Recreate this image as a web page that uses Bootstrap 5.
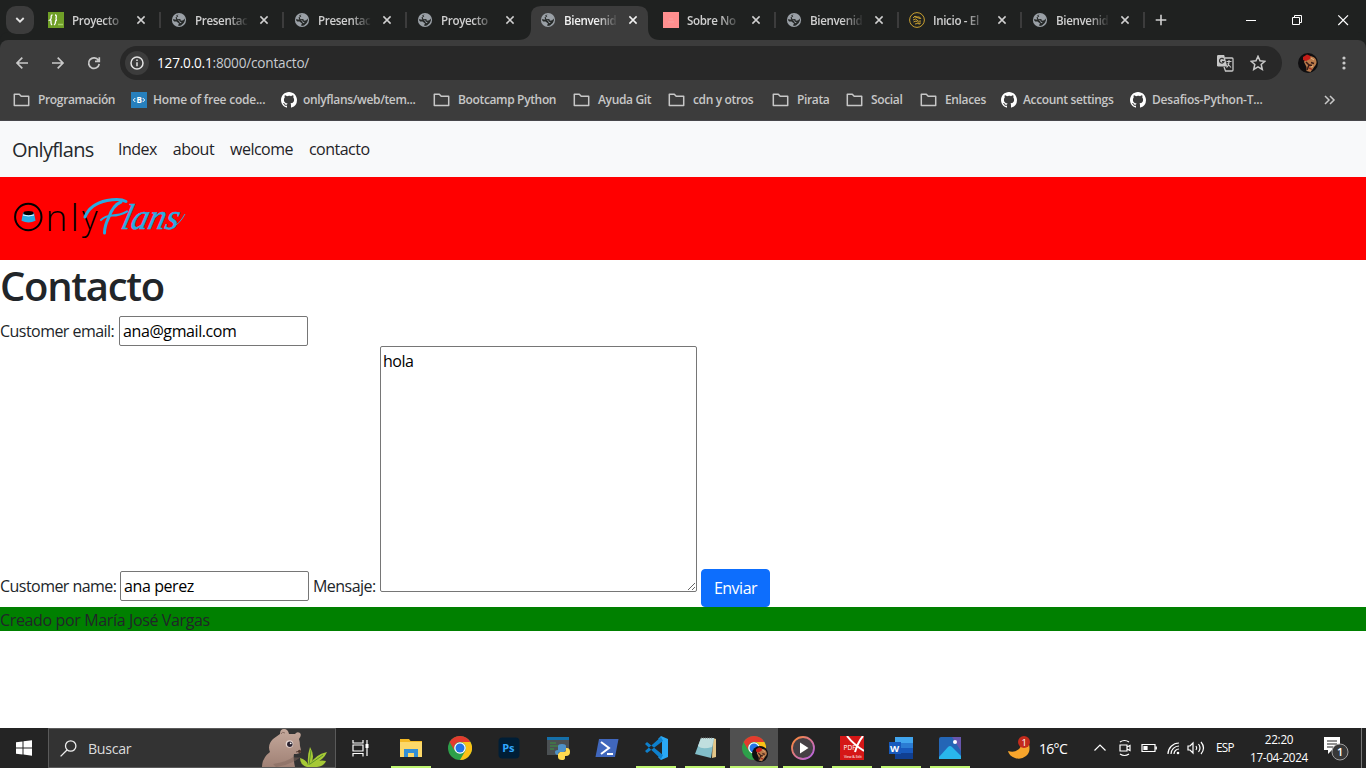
<!DOCTYPE html>
<html lang="es">
<head>
<meta charset="utf-8">
<meta name="viewport" content="width=device-width, initial-scale=1">
<title>Bienvenidos</title>
<link href="https://cdn.jsdelivr.net/npm/bootstrap@5.3.0/dist/css/bootstrap.min.css" rel="stylesheet">
<script src="https://cdn.jsdelivr.net/npm/bootstrap@5.3.0/dist/js/bootstrap.bundle.min.js"></script>
<style>
body{font-family:"Open Sans","Noto Sans",sans-serif;width:1366px;height:768px;overflow:hidden;letter-spacing:-.3px}
svg{display:block;flex:none}
.strip{height:40px;background:#1f2120;padding-left:6px}
.tabsearch{width:28px;height:28px;border-radius:10px;background:#3c3c3c;margin-right:2px;flex:none}
.tab{width:123px;height:40px;padding-left:12px;position:relative;flex:none;color:#d0d0d0}
.tab .ttl{width:54px;padding-top:1px;margin-left:8px;font-size:11.6px;font-weight:600;white-space:nowrap;-webkit-mask-image:linear-gradient(90deg,#000 60%,transparent 100%);letter-spacing:-.35px}
.tab .x{margin-left:10px}
.tab.sep::after{content:"";position:absolute;right:-2px;top:12px;width:2px;height:16px;background:#3c3c3c}
.tab.on{color:#f2f2f2}
.tab.on .shape{position:absolute;left:-10px;top:6px}
.tab.on>*:not(.shape){position:relative}
.tools{background:#3c3c3c;height:46px;box-shadow:0 -8px 0 #1f2120;border-radius:8px 8px 0 0;color:#c9c9c9;padding:0 14px}
.behind{background:#1f2120}
.omni{height:34px;width:1162px;border-radius:17px;background:#282828;padding-left:5px;font-size:13.6px;letter-spacing:-.2px;color:#c7cbd0}
.url{margin-left:8px;padding-top:1px}
.info-dot{width:24px;height:24px;border-radius:50%;background:#3c3c3c}
.marks{background:#3c3c3c;height:35px;border-bottom:1px solid #47464a;display:grid;grid-template-columns:118px 150px 152px 140px 95px 104px 74px 74px 81px 129px 194px 12px;padding:0 0 7px 13px;align-items:center;color:#c7c7c7;font-size:12px;font-weight:600;white-space:nowrap;letter-spacing:-.35px}
.marks>span{display:flex;align-items:center;gap:6px}
.marks>.fold{gap:7px}
.marks>.wide{letter-spacing:-.22px}
.page{height:607px;background:#fff}
.page .navbar{--bs-navbar-color:#1f2327;--bs-navbar-nav-link-padding-x:8px;height:56px;color:#1f2327}
.page .brandname{width:82px;letter-spacing:-.65px;padding-top:6px;padding-bottom:4px;color:#26292c}
.page .nav-link{white-space:nowrap;letter-spacing:-.52px}
.hero{height:83px;background:red;padding:17px 0 0 12px}
.logo{overflow:visible}
h1.head{font-size:40px;font-weight:600;line-height:48px;height:48px;padding-top:2px;letter-spacing:-1.3px}
.box{width:189px;height:30px;border:1px solid #767676;border-radius:2px;padding:1px 2px 1px 3px;color:#000;background:#fff;outline:0;letter-spacing:-.4px}
.lab{line-height:31px;height:30px;white-space:nowrap;letter-spacing:-.54px}
.area{width:317px;height:246px;border:1px solid #767676;border-radius:2px;padding:2px;color:#000;outline:0;display:block;overflow:auto;letter-spacing:-.5px}
.row-end{height:261px}
.send{width:69px;height:38px;border-radius:4px;padding:6px 0;letter-spacing:-.5px}
.foot{background:green;height:24px;line-height:26px;color:#212529;letter-spacing:-.36px}
.bar{height:40px;background:#242424;color:#fff}
.find{width:288px;height:40px;background:#333;border:1px solid #5a5a5a;color:#dcdcdc;font-size:14.2px;padding-left:11px}
.app{width:49px;height:40px;padding-right:2px;position:relative;display:flex;align-items:center;justify-content:center;flex:none}
.app.run::after{content:"";position:absolute;left:4px;width:40px;bottom:0;height:2px;background:#bff571}
.app.cur::before{content:"";position:absolute;left:0;width:48px;height:40px;background:#505050}
.app.cur::after{left:0;width:48px}
.app svg{position:relative}
.slot{display:flex;justify-content:center;flex:none}
.clock{width:76px;font-size:11.7px;line-height:18px;text-align:center}
</style>
</head>
<body>
<svg width="0" height="0" class="position-absolute">
<defs>
<symbol id="globe" viewBox="0 0 16 16"><circle cx="8" cy="8" r="7.100" fill="#9aa0a6"/><path d="M8.500 2.200 6.300 3.300 7.300 4.300 5.600 5.600 6.500 7.200 9.300 7 9.900 8.700 12.300 8.200 13.700 6.500 13.900 8.500 12.700 11 10 13.500 7.600 14.100 7.200 12.900 8 11.500 5.500 9.600 3.200 9.400 1.700 7.800 2.200 7.300 6 7.800 8.300 9.500 9 11.300 10.800 10.200 9 9.800 8.400 8.400 5.500 8 4.500 5.600 5.900 4.500 5.200 3.200z" fill="#252827"/></symbol>
<symbol id="x" viewBox="0 0 10 10"><path d="m1.4 1.4 7.2 7.2m0-7.2L1.4 8.6" stroke="currentColor" stroke-width="1.5"/></symbol>
<symbol id="fold" viewBox="0 0 18 16"><path d="M1.3 2.2h5l1.900 2h7.500v9.200H1.300z" fill="none" stroke="#c7c7c7" stroke-width="1.500" stroke-linejoin="round"/></symbol>
<symbol id="gh" viewBox="0 0 16 16"><path fill="#fff" d="M8 0C3.58 0 0 3.58 0 8c0 3.54 2.29 6.53 5.47 7.59.4.07.55-.17.55-.38 0-.19-.01-.82-.01-1.49-2.01.37-2.53-.49-2.69-.94-.09-.23-.48-.94-.82-1.13-.28-.15-.68-.52-.01-.53.63-.01 1.08.58 1.23.82.72 1.21 1.87.87 2.33.66.07-.52.28-.87.51-1.07-1.78-.2-3.64-.89-3.64-3.95 0-.87.31-1.59.82-2.15-.08-.2-.36-1.02.08-2.12 0 0 .67-.21 2.2.82A7.4 7.4 0 0 1 8 3.87c.68 0 1.36.09 2 .26 1.53-1.04 2.2-.82 2.2-.82.44 1.1.16 1.92.08 2.12.51.56.82 1.27.82 2.15 0 3.07-1.87 3.75-3.65 3.95.29.25.54.73.54 1.48 0 1.07-.01 1.93-.01 2.2 0 .21.15.46.55.38A8 8 0 0 0 16 8c0-4.42-3.58-8-8-8z"/></symbol>
<symbol id="chrome" viewBox="0 0 24 24"><circle cx="12" cy="12" r="12" fill="#2da04a"/><path d="M1.6 6A12 12 0 0 1 22.4 6H12a6 6 0 0 0-5.2 9z" fill="#e33b2e"/><path d="M22.4 6A12 12 0 0 1 12 24l5.2-9A6 6 0 0 0 12 6z" fill="#fbc116"/><circle cx="12" cy="12" r="5.8" fill="#fff"/><circle cx="12" cy="12" r="4.5" fill="#2374e8"/></symbol>
<symbol id="face" viewBox="0 0 20 20"><circle cx="10" cy="10" r="10" fill="#0f0e10"/><path d="M8 4c6-2 11 1 10.500 6-1 3-2 3-3 5l-3 4-4-1v-4L6 9z" fill="#b97a4a"/><path d="m5 4 4-2.500L12.500 3l-.5 3-4 2-3-1z" fill="#c51d18"/><path d="m8 9 3 3-2 5M13 9.500l3 1M11.500 12l2.500.5" stroke="#381b17" stroke-width="1.500" fill="none"/><path d="m11 15 3 1.500" stroke="#a0271b" stroke-width="1.300"/><path d="m13 5 3 2m-3 7 2-1" stroke="#e9b887"/></symbol>
</defs>
</svg>

<header class="behind">
<div class="strip d-flex align-items-center">
<div class="tabsearch d-flex align-items-center justify-content-center"><svg width="10" height="10" viewBox="0 0 10 10"><path d="m1.3 3 3.7 3.7L8.7 3" fill="none" stroke="#e3e3e3" stroke-width="1.8"/></svg></div>
<div class="tab sep d-flex align-items-center"><svg width="16" height="16"><path d="M0 0h16v16H0z" fill="#6f9f27"/><path d="M4.500 3Q3 3 3.200 5T2 8q1.200 0 1 2t1 3M7 3q1.700 0 1.200 2.500T9 8q-1.500 0-1.500 2T6 13" fill="none" stroke="#fff" stroke-width="1.300"/><path d="M10 12.500h5" stroke="#a6cf68" stroke-width="1.500"/></svg><span class="ttl">Proyecto</span><svg class="x" width="10" height="10"><use href="#x"/></svg></div>
<div class="tab sep d-flex align-items-center"><svg width="16" height="16"><use href="#globe"/></svg><span class="ttl">Presentac</span><svg class="x" width="10" height="10"><use href="#x"/></svg></div>
<div class="tab sep d-flex align-items-center"><svg width="16" height="16"><use href="#globe"/></svg><span class="ttl">Presentac</span><svg class="x" width="10" height="10"><use href="#x"/></svg></div>
<div class="tab d-flex align-items-center"><svg width="16" height="16"><use href="#globe"/></svg><span class="ttl">Proyecto</span><svg class="x" width="10" height="10"><use href="#x"/></svg></div>
<div class="tab on d-flex align-items-center"><svg class="shape" width="145" height="34"><path d="M0 34q13 0 13-12V10Q13 0 23 0h97q10 0 10 10v12q0 12 12 12z" fill="#3c3c3c"/></svg><svg width="16" height="16"><use href="#globe"/></svg><span class="ttl">Bienvenid</span><svg class="x" width="10" height="10"><use href="#x"/></svg></div>
<div class="tab sep d-flex align-items-center"><svg width="16" height="16"><path d="M0 0h16v16H0z" fill="#ff8f8f"/><path d="M6 7h4m-5 3h6" stroke="#f7a2a2"/></svg><span class="ttl">Sobre No</span><svg class="x" width="10" height="10"><use href="#x"/></svg></div>
<div class="tab sep d-flex align-items-center"><svg width="16" height="16"><use href="#globe"/></svg><span class="ttl">Bienvenid</span><svg class="x" width="10" height="10"><use href="#x"/></svg></div>
<div class="tab sep d-flex align-items-center"><svg width="16" height="16" fill="none" stroke="#c9a030"><circle cx="8" cy="8" r="7.400"/><path d="M4 6q2-3 4-1 3-1 4 2M4 8q3-2 4 0t4 1M4.500 10q3-2 4 0t3.500 1M6 12q2-1 5 0M5 4.500l6 2"/></svg><span class="ttl">Inicio - El</span><svg class="x" width="10" height="10"><use href="#x"/></svg></div>
<div class="tab sep d-flex align-items-center"><svg width="16" height="16"><use href="#globe"/></svg><span class="ttl">Bienvenid</span><svg class="x" width="10" height="10"><use href="#x"/></svg></div>
<svg style="margin-left:7px" width="20" height="20"><path d="M10 4.700v10.600M4.700 10h10.600" transform="translate(1)" stroke="#d0d0d0" stroke-width="1.600"/></svg>
<svg class="ms-auto" width="120" height="20" fill="none" stroke="#fff"><path d="M0 10.500h10"/><path d="M46.500 7.500h7v7h-7zM48.500 7.500v-2h7v7h-2"/><path d="m92.300 5.300 9.700 9.700m0-9.700-9.700 9.700" stroke-width="1.200"/></svg>
</div>
<div class="tools d-flex align-items-center">
<svg width="106" height="20" fill="none" stroke="#c9c9c9" stroke-width="1.700"><path d="M14 10H3m5.300-5.300L3 10l5.300 5.300M38 10h11m-5.300-5.300L49 10l-5.300 5.300M84.400 7.200A5.300 5.300 0 1 0 85.200 11M85.300 4.200v4.200H81"/></svg>
<div class="omni d-flex align-items-center"><span class="info-dot d-flex align-items-center justify-content-center"><svg width="14" height="14"><circle cx="7" cy="7" r="6" fill="none" stroke="#e3e3e3" stroke-width="1.500"/><path d="M7 6.300v4M7 3.500V5" stroke="#e3e3e3" stroke-width="1.500"/></svg></span><span class="url"><span class="text-white">127.0.0.1</span>:8000/contacto/</span>
<svg class="ms-auto me-3" width="17" height="17"><path d="M1.200 0h6l3 11.500h-9Q0 11.500 0 10.300V1.200Q0 0 1.200 0z" fill="#c7c7c7"/><path d="M8 3h7q1 0 1 1v11q0 1-1 1H8.500L7 12" fill="none" stroke="#c7c7c7" stroke-width="1.300"/><path d="M6.700 4.400A2.300 2.300 0 1 0 7 6.500H5" fill="none" stroke="#333" stroke-width="1.200"/><path d="M9.500 6.500h5M12 5v1.500q0 4-2.500 6M10.500 8.500l3.500 4" fill="none" stroke="#c7c7c7" stroke-width="1.100"/></svg>
<svg width="16" height="16" style="margin-right:16px"><path d="m8 1.300 2 4.500 4.900.5-3.700 3.200 1.100 4.900L8 11.800l-4.300 2.600 1.100-4.900-3.700-3.200L6 5.800z" fill="none" stroke="#c9c9c9" stroke-width="1.500"/></svg></div>
<svg width="20" height="20" style="margin-left:16px"><use href="#face"/></svg>
<svg class="ms-auto" width="16" height="20" fill="#c9c9c9"><circle cx="8" cy="5" r="1.600"/><circle cx="8" cy="10" r="1.600"/><circle cx="8" cy="15" r="1.600"/></svg>
</div>
<div class="marks">
<span class="fold"><svg width="18" height="16"><use href="#fold"/></svg>Programación</span>
<span class="wide"><svg width="16" height="16"><path d="M0 0h16v16H0z" fill="#2780bd"/><path d="M4.300 6 2.300 8l2 2m7.400-4 2 2-2 2" fill="none" stroke="#fff"/><text x="5.400" y="11" font-size="8" font-weight="700" fill="#fff">B</text></svg>Home of free code...</span>
<span><svg width="16" height="16"><use href="#gh"/></svg>onlyflans/web/tem...</span>
<span class="fold"><svg width="18" height="16"><use href="#fold"/></svg>Bootcamp Python</span>
<span class="fold"><svg width="18" height="16"><use href="#fold"/></svg>Ayuda Git</span>
<span class="fold"><svg width="18" height="16"><use href="#fold"/></svg>cdn y otros</span>
<span class="fold"><svg width="18" height="16"><use href="#fold"/></svg>Pirata</span>
<span class="fold"><svg width="18" height="16"><use href="#fold"/></svg>Social</span>
<span class="fold"><svg width="18" height="16"><use href="#fold"/></svg>Enlaces</span>
<span><svg width="16" height="16"><use href="#gh"/></svg>Account settings</span>
<span class="wide"><svg width="16" height="16"><use href="#gh"/></svg>Desafios-Python-T...</span>
<svg width="12" height="12"><path d="m1 2 4 4-4 4m5-8 4 4-4 4" fill="none" stroke="#c9c9c9" stroke-width="1.500"/></svg>
</div>
</header>

<main class="page">
<nav class="navbar navbar-expand bg-light"><div class="container-fluid">
<a class="navbar-brand brandname" href="#">Onlyflans</a>
<ul class="navbar-nav me-auto"><li class="nav-item"><a class="nav-link" href="#">Index</a></li><li class="nav-item"><a class="nav-link" href="#">about</a></li><li class="nav-item"><a class="nav-link" href="#">welcome</a></li><li class="nav-item"><a class="nav-link" href="#">contacto</a></li></ul>
</div></nav>
<div class="hero">
<svg class="logo" width="180" height="56" viewBox="0 0 180 56"><circle cx="16.300" cy="23" r="13.200" fill="none" stroke="#000" stroke-width="2"/><path d="M11 18.500h11l1.500 8.300q-7 3.200-14 0z" fill="#29abe2"/><ellipse cx="16.500" cy="19" rx="5.200" ry="2" fill="#000"/><path d="M11 21q5.500 2 11 0" fill="none" stroke="#e9f8ff"/>
<text y="36.500" font-size="37" font-weight="300" font-family="Open Sans" fill="#000" letter-spacing="0"><tspan x="33.500">n</tspan><tspan x="58.500">l</tspan></text><text x="70" y="35.500" font-size="34" font-weight="300" font-family="Open Sans" fill="#000" letter-spacing="0">y</text>
<path d="M73 23Q78 10 95 6.500q13-2.500 19 1" fill="none" stroke="#29abe2" stroke-width="3" stroke-linecap="round"/>
<path d="M92.500 39q0-7 4-15Q101 11 109 8" fill="none" stroke="#29abe2" stroke-width="3" stroke-linecap="round"/>
<path d="M89 26q4-4 11-4.500 8 0 15-4" fill="none" stroke="#29abe2" stroke-width="2.200" stroke-linecap="round"/>
<text transform="translate(108 34.500) skewX(-14)" font-size="36" font-family="Liberation Serif" font-style="italic" fill="#29abe2" stroke="#29abe2" stroke-width=".5" textLength="57" lengthAdjust="spacingAndGlyphs" letter-spacing="0">lans</text><path d="M160 33q7-2 13-13" fill="none" stroke="#29abe2"/></svg>
</div>
<h1 class="head mb-2">Contacto</h1>
<form>
<div class="d-flex"><label class="lab" for="email" style="width:119px">Customer email:</label><input class="box" id="email" value="ana@gmail.com"></div>
<div class="row-end d-flex align-items-end">
<label class="lab" for="name" style="width:120px;margin-bottom:6px">Customer name:</label><input class="box" id="name" value="ana perez" style="margin-bottom:6px"><label class="lab" for="msg" style="width:67px;margin:0 0 6px 4px">Mensaje:</label><textarea class="area" id="msg" style="margin-bottom:15px">hola</textarea><button class="btn btn-primary send ms-1" type="button">Enviar</button>
</div>
</form>
<footer class="foot">Creado por María José Vargas</footer>
</main>

<div class="bar d-flex align-items-center">
<div class="slot" style="width:48px"><svg width="16" height="16" fill="#fff"><path d="m0 2.300 6.500-.9v6.100H0zm7.500-1L16 .2v7.300H7.500zM0 8.500h6.500v6.100L0 13.700zm7.500 0H16v7.300l-8.500-1.200z"/></svg></div>
<div class="find d-flex align-items-center"><svg width="17" height="17" fill="none" stroke="#eee" stroke-width="1.300"><circle cx="10.700" cy="6" r="5.200"/><path d="M7 10 .6 16.400"/></svg><span style="margin-left:11px;padding-top:1px">Buscar</span>
<svg class="ms-auto me-1" width="70" height="38" viewBox="0 0 70 38"><defs><linearGradient id="fur" x2="0" y2="1"><stop stop-color="#c5a99c"/><stop offset="1" stop-color="#a08175"/></linearGradient></defs><path d="M1 38q0-9 8-15-3-7 3-13l7-5q0-5 4-5 4 0 5 5h6q2-3 5-1 2 2-1 6 1 3 1 7 1 3 1 6-2 2-7 2-1 4 1 13z" fill="url(#fur)"/><path d="M12 35q14-2 20-7 4 1 8 0-10 8-25 10z" fill="#7f655c" opacity=".5"/><path d="M20 5q1-3 4-1" stroke="#8a6e64" fill="none"/><circle cx="28.500" cy="15" r="3.800" fill="#e5d5cf"/><circle cx="28.800" cy="15.300" r="2.700" fill="#2b2331"/><circle cx="29.700" cy="14.300" r=".9" fill="#fff"/><path d="M35 23q2-1 4 0" stroke="#59453f" fill="none"/><circle cx="38.500" cy="22.300" r="1.600" fill="#50372c"/><path d="M46 38q-7-2-7-9 7 2 8 7-1-9 2-18 6 10 0 18 4-10 17-13-3 8-14 12 6-5 13-3-3 7-14 6z" fill="#a6c936"/><path d="m48 36 2-15m-1 14 13-9" stroke="#5d922b"/></svg></div>
<div class="slot" style="width:51px"><svg width="17" height="17" fill="none" stroke="#fff" stroke-width="1.200" style="margin-right:3px"><path d="M1 0v3h10V0M1 16.500v-3h10v3M1 5h10v6H1zM15 0v16"/><path d="M15 4v4" stroke-width="3"/></svg></div>

<span class="app run ms-0"><svg width="24" height="24"><path d="M1 3h9l1.500 2H23v16H1z" fill="#f4b924"/><path d="M1 6h22v15H1z" fill="#fcd869"/><path d="M5 21v-8h14v8h-4v-4H9v4z" fill="#338fd5"/></svg></span>
<span class="app"><svg width="24" height="24"><use href="#chrome"/></svg></span>
<span class="app"><svg width="22" height="22"><rect width="21" height="21" x=".5" y=".5" rx="4" fill="#001e36"/><text x="4.300" y="15" font-size="11" font-weight="700" fill="#31a8ff">Ps</text></svg></span>
<span class="app"><svg width="24" height="24"><path d="M1 1h22v18H1z" fill="#4b5053"/><path d="M1 1h22v3H1z" fill="#1570aa"/><path d="M4 7h6M4 10h8M4 13h4" stroke="#427e47" stroke-width="1.500"/><path d="M12 14v-4q0-2 4-2t4 2v4l-2 2h-4q-2 0-2 3-3 0-3-3 0-2 3-2z" fill="#4e91c8"/><path d="M20 12h1q3 0 3 4t-4 4h-1v2q0 2-3 2-4 0-4-3v-3l2-2h4q2 0 2-2z" fill="#ffda50"/></svg></span>
<span class="app"><svg width="24" height="20"><path d="M4 1h19.500L20 19H.5z" fill="#4067bd"/><path d="m6 4 8 6-8 6m6 0h6" fill="none" stroke="#fff" stroke-width="2"/></svg></span>
<span class="app run"><svg width="24" height="24"><path d="m17 0 7 3v18l-7 3-3-3 4-3V6l-4-3z" fill="#2aa9f5"/><path d="m17 1-16 14 2 2L19 5M1 8l2-2 16 13-2 4z" fill="#0e80cc"/></svg></span>
<span class="app run"><svg width="24" height="24"><path d="m20 2 3 1v18l-4 1z" fill="#e3c689"/><path d="M8 2h13l-3 20-16-4z" fill="#82bec9"/><path d="M8 2h13l-2 9Q9 14 5 10z" fill="#c1dfdf"/><path d="M8 2h12" stroke="#777" stroke-dasharray="1"/></svg></span>
<span class="app run cur"><svg width="28" height="28"><use href="#chrome" x="2" y="2" width="24" height="24"/><use href="#face" x="12" y="12" width="16" height="16"/></svg></span>
<span class="app run"><svg width="24" height="24"><defs><linearGradient id="ring" x2="1" y2="1"><stop stop-color="#ff8b32"/><stop offset="1" stop-color="#b260ee"/></linearGradient></defs><circle cx="12" cy="12" r="11" fill="#454045" stroke="url(#ring)" stroke-width="1.800"/><path d="M9 6.500 17.500 12 9 17.500z" fill="#fff"/></svg></span>
<span class="app run"><svg width="24" height="24"><path d="M0 0h24v24H0z" fill="#d51717"/><path d="M7 0q6 8 17 15M23 0q-5 6-8 16" stroke="#fff" stroke-width="2" fill="none"/><text x="3.500" y="14" font-size="6.500" fill="#fff" letter-spacing="0">PDF</text><text x="4" y="22" font-size="3.600" fill="#fff" letter-spacing="-.1">View &amp; Edit</text></svg></span>
<span class="app run"><svg width="24" height="22"><path d="M6 0h18v6H6z" fill="#41a5ee"/><path d="M6 6h18v5H6z" fill="#2b7cd3"/><path d="M6 11h18v5H6z" fill="#185abd"/><path d="M6 16h18v6H6z" fill="#103f91"/><path d="M0 5h12v12H0z" fill="#185abd"/><text x="1" y="14.500" font-size="9.500" font-weight="700" fill="#fff">W</text></svg></span>
<span class="app run"><svg width="22" height="22"><rect width="22" height="22" rx="2" fill="#2466b6"/><path d="M13 0h9v14z" fill="#6856ae"/><path d="m0 20 9-10q2-2 4 0l9 9v3H0z" fill="#29b6eb"/><circle cx="16" cy="5" r="2" fill="#fff"/></svg></span>

<div class="slot ms-auto" style="width:24px;margin-right:1px"><svg width="24" height="26" viewBox="0 0 24 26"><path d="M1 16q9 3 14-6l7-1q2 8-3 12-5 4-11 2-6-2-7-7z" fill="#f7a52c"/><circle cx="17" cy="7" r="6" fill="#c42b1c"/><text x="14.600" y="10.500" font-size="9.500" fill="#fff" letter-spacing="0">1</text></svg></div>
<span style="width:54px;margin-left:7px;font-size:14px;letter-spacing:-.7px">16°C</span>
<svg width="114" height="20" fill="none" stroke="#fff" stroke-width="1.200"><path d="m1.500 12.500 5.500-5.500 5.500 5.500"/><path d="M27 7h7v6h-7zM34 9l3-1.500v5L34 11M27 4q4.500-3 9 0M27 16q4.500 3 9 0"/><path d="M49 6.500h13v7H49zM63.300 8.500v3"/><path d="M51 8.500h3v3h-3z" fill="#fff"/><path d="M75 16A11 11 0 0 1 86 5M78 16a8 8 0 0 1 8-8M81 16a5 5 0 0 1 5-5"/><circle cx="85" cy="15" r="1.300" fill="#fff" stroke="none"/><path d="M95 8h2l3-3v10l-3-3h-2zM103 8q1.500 2 0 4m2.500-6q3 4 0 8m2.500-10q5 6 0 12"/></svg>
<span style="margin-left:9px;width:24px;font-size:11.700px;letter-spacing:-.7px">ESP</span>
<div class="clock d-flex flex-column" style="margin:0 7px 0 1px"><span style="margin-top:-1px">22:20</span><span>17-04-2024</span></div>
<svg width="26" height="26"><path d="M0 2h16v13H8l-4 4v-4H0z" fill="#fff"/><path d="M3 6h10M3 9h10M3 12h6" stroke="#242424"/><circle cx="16" cy="17" r="8" fill="#383838" stroke="#a0a0a0"/><text x="13" y="21" font-size="11" font-weight="600" fill="#fff" letter-spacing="0">1</text></svg>
<div style="width:1px;height:40px;background:#777;margin:0 4px 0 11px"></div>
</div>
</body>
</html>
